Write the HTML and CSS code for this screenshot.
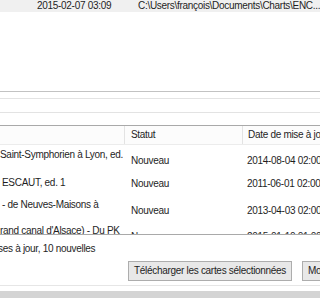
FILE: index.html
```html
<!DOCTYPE html>
<html lang="fr">
<head>
    <meta charset="UTF-8">
    <title>Cartes</title>
    <link rel="stylesheet" href="styles.css">
</head>
<body>
    <div class="window">
        <div class="files">
            <div class="file-row">
                <span class="file-date">2015-02-07 03:09</span>
                <span class="file-path">C:\Users\françois\Documents\Charts\ENC...</span>
            </div>
        </div>

        <div class="filter"></div>

        <div class="charts">
            <div class="charts-head">
                <div class="col-name"></div>
                <div class="col-status">Statut</div>
                <div class="col-date">Date de mise à jour</div>
            </div>
            <div class="charts-body">
                <div class="chart-row tall">
                    <div class="col-name"><span class="cut">Saint-Symphorien à Lyon, ed.</span><span>&nbsp;</span></div>
                    <div class="col-status">Nouveau</div>
                    <div class="col-date">2014-08-04 02:00</div>
                </div>
                <div class="chart-row">
                    <div class="col-name"><span>ESCAUT, ed. 1</span></div>
                    <div class="col-status">Nouveau</div>
                    <div class="col-date">2011-06-01 02:00</div>
                </div>
                <div class="chart-row tall">
                    <div class="col-name"><span>- de Neuves-Maisons à</span><span>&nbsp;</span></div>
                    <div class="col-status">Nouveau</div>
                    <div class="col-date">2013-04-03 02:00</div>
                </div>
                <div class="chart-row tall">
                    <div class="col-name"><span class="cut">rand canal d'Alsace) - Du PK</span><span>&nbsp;</span></div>
                    <div class="col-status">Nouveau</div>
                    <div class="col-date">2015-01-10 01:00</div>
                </div>
            </div>
        </div>

        <div class="summary"><span class="cut">ses à jour, 10 nouvelles</span></div>

        <div class="actions">
            <a href="#" class="button">Télécharger les cartes sélectionnées</a>
            <a href="#" class="button">Mode hors ligne</a>
        </div>

        <div class="statusbar"></div>
    </div>
</body>
</html>
```

FILE: styles.css
```css
html, body {
    margin: 0;
    padding: 0;
    width: 320px;
    height: 300px;
    overflow: hidden;
    background-color: #ffffff;
    color: #1e1e1e;
    font-family: 'Liberation Sans', Arial, sans-serif;
    font-size: 10px;
    letter-spacing: -0.3px;
}

.window {
    width: 320px;
    height: 300px;
    display: flex;
    flex-direction: column;
    overflow: hidden;
}

.files {
    height: 91px;
    flex: none;
    border-bottom: 1px solid #c2c2c2;
}

.file-row {
    display: flex;
    height: 12px;
    line-height: 12px;
    background-color: #f0f0f0;
    white-space: nowrap;
    overflow: hidden;
}

.file-date {
    margin-left: 37px;
    width: 101px;
    flex: none;
}

.filter {
    flex: none;
    height: 13px;
    margin-top: 6px;
    border-top: 1px solid #e3e3e3;
    border-bottom: 1px solid #e3e3e3;
}

.charts {
    flex: none;
    margin-top: 12px;
    height: 108px;
    border-top: 1px solid #a9a9a9;
    border-bottom: 1px solid #a9a9a9;
    overflow: hidden;
}

.charts-head,
.chart-row {
    display: flex;
    white-space: nowrap;
}

.charts-head {
    height: 18px;
    line-height: 18px;
    background-color: #fcfcfc;
    border-bottom: 1px solid #ececec;
}

    .charts-head .col-name,
    .charts-head .col-status {
        border-right: 1px solid #e3e3e3;
    }

.col-name {
    width: 124px;
    flex: none;
    overflow: hidden;
}

.col-status {
    width: 111px;
    flex: none;
    padding-left: 6px;
}

.col-date {
    flex: none;
    padding-left: 5px;
}

.chart-row {
    height: 24px;
    align-items: center;
}

    .chart-row.tall {
        height: 26px;
    }

    .chart-row .col-name {
        display: flex;
        flex-direction: column;
        line-height: 12px;
        padding-left: 2px;
        box-sizing: border-box;
    }

    .chart-row.tall .col-name {
        align-self: flex-start;
        padding-top: 4px;
    }

    .chart-row.tall .col-status,
    .chart-row.tall .col-date {
        padding-top: 4px;
    }

    .chart-row .col-status {
        padding-left: 7px;
    }

.cut {
    margin-left: -2px;
}

.summary {
    flex: none;
    height: 14px;
    line-height: 14px;
    margin-top: 7px;
    white-space: nowrap;
}

.actions {
    flex: none;
    display: flex;
    gap: 10px;
    margin-top: 5px;
    padding-left: 128px;
    white-space: nowrap;
}

.button {
    display: block;
    flex: none;
    height: 18px;
    line-height: 18px;
    padding: 0 5px;
    background-color: #e8e8e8;
    border: 1px solid #adadad;
    color: #1e1e1e;
    text-decoration: none;
}

.statusbar {
    flex: none;
    margin-top: 4px;
    border-top: 1px solid #e6e6e6;
    height: 5px;
    border-bottom: 7px solid #d4d4d4;
}
```
